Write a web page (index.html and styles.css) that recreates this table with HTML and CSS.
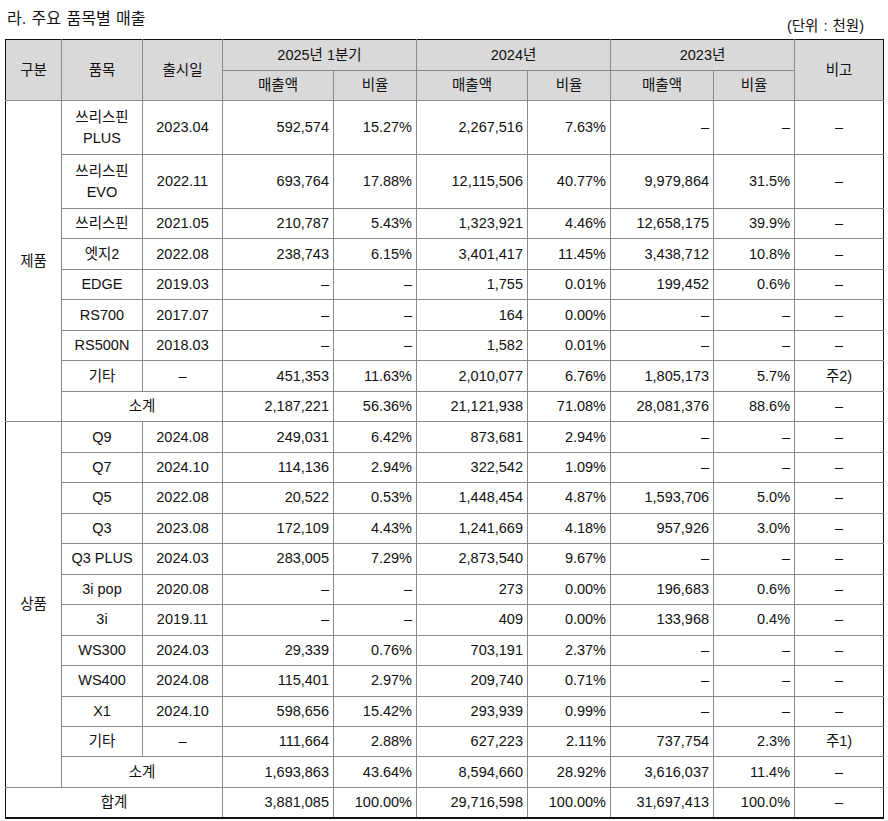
FILE: index.html
```html
<!DOCTYPE html>
<html lang="ko">
<head>
<meta charset="utf-8">
<title>주요 품목별 매출</title>
<link rel="stylesheet" href="styles.css">
</head>
<body>
<div class="page">
  <div class="caption">
    <div class="title">라. 주요 품목별 매출</div>
    <div class="unit">(단위 : 천원)</div>
  </div>
  <table class="sales">
    <colgroup>
      <col class="c-cat"><col class="c-item"><col class="c-date">
      <col class="c-amt1"><col class="c-rate1">
      <col class="c-amt2"><col class="c-rate2">
      <col class="c-amt3"><col class="c-rate3">
      <col class="c-note">
    </colgroup>
    <thead>
      <tr class="h1">
        <th rowspan="2">구분</th><th rowspan="2">품목</th><th rowspan="2">출시일</th>
        <th colspan="2">2025년 1분기</th><th colspan="2">2024년</th><th colspan="2">2023년</th>
        <th rowspan="2">비고</th>
      </tr>
      <tr class="h2">
        <th>매출액</th><th>비율</th><th>매출액</th><th>비율</th><th>매출액</th><th>비율</th>
      </tr>
    </thead>
    <tbody>
      <tr class="r2"><td rowspan="9" class="cat">제품</td><td class="c">쓰리스핀<br>PLUS</td><td class="c">2023.04</td><td>592,574</td><td>15.27%</td><td>2,267,516</td><td>7.63%</td><td>–</td><td>–</td><td class="c">–</td></tr>
      <tr class="r2"><td class="c">쓰리스핀<br>EVO</td><td class="c">2022.11</td><td>693,764</td><td>17.88%</td><td>12,115,506</td><td>40.77%</td><td>9,979,864</td><td>31.5%</td><td class="c">–</td></tr>
      <tr class="r1"><td class="c">쓰리스핀</td><td class="c">2021.05</td><td>210,787</td><td>5.43%</td><td>1,323,921</td><td>4.46%</td><td>12,658,175</td><td>39.9%</td><td class="c">–</td></tr>
      <tr class="r1"><td class="c">엣지2</td><td class="c">2022.08</td><td>238,743</td><td>6.15%</td><td>3,401,417</td><td>11.45%</td><td>3,438,712</td><td>10.8%</td><td class="c">–</td></tr>
      <tr class="r1"><td class="c">EDGE</td><td class="c">2019.03</td><td>–</td><td>–</td><td>1,755</td><td>0.01%</td><td>199,452</td><td>0.6%</td><td class="c">–</td></tr>
      <tr class="r1"><td class="c">RS700</td><td class="c">2017.07</td><td>–</td><td>–</td><td>164</td><td>0.00%</td><td>–</td><td>–</td><td class="c">–</td></tr>
      <tr class="r1"><td class="c">RS500N</td><td class="c">2018.03</td><td>–</td><td>–</td><td>1,582</td><td>0.01%</td><td>–</td><td>–</td><td class="c">–</td></tr>
      <tr class="r1"><td class="c">기타</td><td class="c">–</td><td>451,353</td><td>11.63%</td><td>2,010,077</td><td>6.76%</td><td>1,805,173</td><td>5.7%</td><td class="c">주2)</td></tr>
      <tr class="r1"><td colspan="2" class="c">소계</td><td>2,187,221</td><td>56.36%</td><td>21,121,938</td><td>71.08%</td><td>28,081,376</td><td>88.6%</td><td class="c">–</td></tr>

      <tr class="r1"><td rowspan="12" class="cat">상품</td><td class="c">Q9</td><td class="c">2024.08</td><td>249,031</td><td>6.42%</td><td>873,681</td><td>2.94%</td><td>–</td><td>–</td><td class="c">–</td></tr>
      <tr class="r1"><td class="c">Q7</td><td class="c">2024.10</td><td>114,136</td><td>2.94%</td><td>322,542</td><td>1.09%</td><td>–</td><td>–</td><td class="c">–</td></tr>
      <tr class="r1"><td class="c">Q5</td><td class="c">2022.08</td><td>20,522</td><td>0.53%</td><td>1,448,454</td><td>4.87%</td><td>1,593,706</td><td>5.0%</td><td class="c">–</td></tr>
      <tr class="r1"><td class="c">Q3</td><td class="c">2023.08</td><td>172,109</td><td>4.43%</td><td>1,241,669</td><td>4.18%</td><td>957,926</td><td>3.0%</td><td class="c">–</td></tr>
      <tr class="r1"><td class="c">Q3 PLUS</td><td class="c">2024.03</td><td>283,005</td><td>7.29%</td><td>2,873,540</td><td>9.67%</td><td>–</td><td>–</td><td class="c">–</td></tr>
      <tr class="r1"><td class="c">3i pop</td><td class="c">2020.08</td><td>–</td><td>–</td><td>273</td><td>0.00%</td><td>196,683</td><td>0.6%</td><td class="c">–</td></tr>
      <tr class="r1"><td class="c">3i</td><td class="c">2019.11</td><td>–</td><td>–</td><td>409</td><td>0.00%</td><td>133,968</td><td>0.4%</td><td class="c">–</td></tr>
      <tr class="r1"><td class="c">WS300</td><td class="c">2024.03</td><td>29,339</td><td>0.76%</td><td>703,191</td><td>2.37%</td><td>–</td><td>–</td><td class="c">–</td></tr>
      <tr class="r1"><td class="c">WS400</td><td class="c">2024.08</td><td>115,401</td><td>2.97%</td><td>209,740</td><td>0.71%</td><td>–</td><td>–</td><td class="c">–</td></tr>
      <tr class="r1"><td class="c">X1</td><td class="c">2024.10</td><td>598,656</td><td>15.42%</td><td>293,939</td><td>0.99%</td><td>–</td><td>–</td><td class="c">–</td></tr>
      <tr class="r1"><td class="c">기타</td><td class="c">–</td><td>111,664</td><td>2.88%</td><td>627,223</td><td>2.11%</td><td>737,754</td><td>2.3%</td><td class="c">주1)</td></tr>
      <tr class="r1"><td colspan="2" class="c">소계</td><td>1,693,863</td><td>43.64%</td><td>8,594,660</td><td>28.92%</td><td>3,616,037</td><td>11.4%</td><td class="c">–</td></tr>

      <tr class="r1 total"><td colspan="3" class="c">합계</td><td>3,881,085</td><td>100.00%</td><td>29,716,598</td><td>100.00%</td><td>31,697,413</td><td>100.0%</td><td class="c">–</td></tr>
    </tbody>
  </table>
</div>
</body>
</html>
```

FILE: styles.css
```css
html, body {
  margin: 0;
  padding: 0;
  background: #ffffff;
}

body {
  font-family: "Liberation Sans", "Noto Sans CJK KR", sans-serif;
  font-size: 14.5px;
  color: #111111;
}

.page {
  padding: 0 4px 0 5px;
}

.caption {
  display: flex;
  justify-content: space-between;
  height: 39px;
}

.title {
  padding: 9px 0 0 2px;
  font-size: 16px;
  word-spacing: 1px;
  line-height: 20px;
}

.unit {
  align-self: flex-end;
  padding-right: 20px;
  margin-bottom: 5px;
  line-height: 16px;
  word-spacing: 1px;
}

.sales {
  width: 879px;
  border-collapse: collapse;
  table-layout: fixed;
  border: 1px solid #111111;
  border-bottom-width: 2px;
}

.c-cat { width: 56px; }
.c-item { width: 81px; }
.c-date { width: 80px; }
.c-amt1 { width: 111px; }
.c-rate1 { width: 83px; }
.c-amt2 { width: 111px; }
.c-rate2 { width: 83px; }
.c-amt3 { width: 103px; }
.c-rate3 { width: 81px; }
.c-note { width: 89px; }

.sales th,
.sales td {
  border: 1px solid #8a8a8a;
  padding: 0 4px 0 4px;
  line-height: 21px;
  white-space: nowrap;
  vertical-align: middle;
}

.sales th {
  background: #d9d9d9;
  font-weight: normal;
  text-align: center;
}

.sales thead tr:first-child th {
  border-top-color: #111111;
}

.sales th:first-child,
.sales td.cat {
  border-left-color: #111111;
}

.sales tr > :last-child {
  border-right-color: #111111;
}

.h1 { height: 31px; }
.h2 { height: 30px; }

.sales td {
  text-align: right;
}

.sales td.c,
.sales td.cat {
  text-align: center;
  padding: 0 2px;
}

.r2 { height: 54px; }
.r1 { height: 30.47px; }

.total td {
  border-bottom: 2px solid #111111;
}
.total td:first-child {
  border-left-color: #111111;
}
```
